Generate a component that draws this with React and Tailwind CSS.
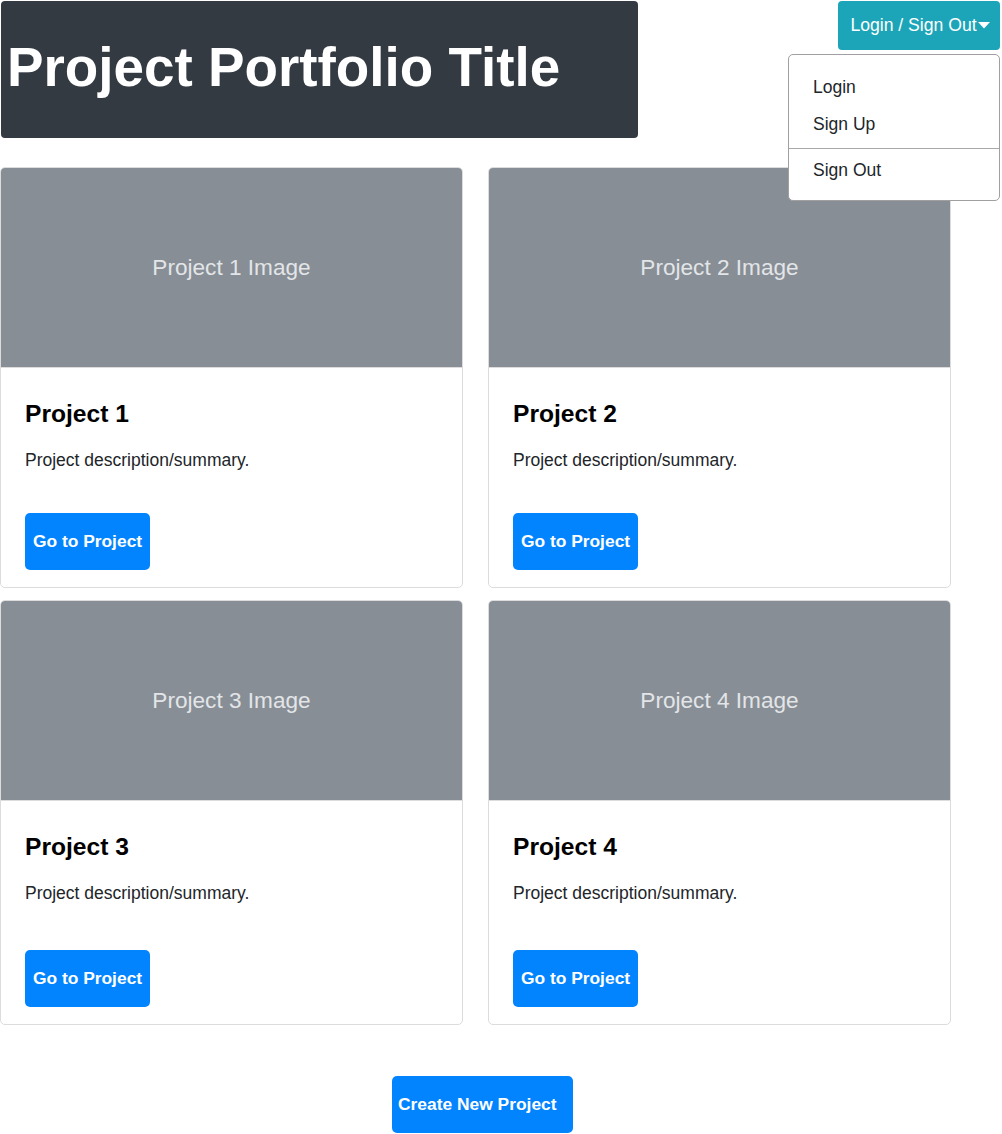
import React from "react";

const projects = [1, 2, 3, 4];

function ProjectCard({ n }) {
  // the second row sits a little taller in the reference
  const gap = n > 2 ? "mt-[44px]" : "mt-[40px]";
  return (
    <div className="flex flex-col rounded-[5px] border border-[#dcdcdc] bg-white overflow-hidden">
      <div className="h-[200px] bg-[#878e95] border-b border-[#dcdcdc] flex items-center justify-center text-[22.6px] text-[#e3e5e8]">
        Project {n} Image
      </div>
      <div className="pl-[24px] pr-[25px] pt-[30px] pb-[17px]">
        <h2 className="text-[24.6px] font-bold text-black leading-[32px]">Project {n}</h2>
        <p className="mt-[17px] text-[17.5px] text-[#212529] leading-[26px]">Project description/summary.</p>
        <button className={`${gap} h-[57px] w-[125px] rounded-[5px] bg-[#0384ff] text-white font-bold text-[17.4px]`}>
          Go to Project
        </button>
      </div>
    </div>
  );
}

export default function App() {
  return (
    <div className="w-[1002px] min-h-[1134px] bg-white font-['Liberation_Sans',Arial,sans-serif]">
      <div className="flex justify-between items-start">
        <div className="ml-px mt-px w-[637px] h-[137px] rounded-[4px] bg-[#343a42] flex items-center pl-[6px] pb-[4px]">
          <h1 className="text-[54.8px] font-bold text-white leading-none">Project Portfolio Title</h1>
        </div>
        <div className="relative mt-px mr-[2px]">
          <button className="h-[49px] w-[162px] rounded-[4px] bg-[#1ca5b8] text-white text-[17.6px] flex items-center justify-center pl-[2px]">
            Login / Sign Out
            <svg width="12" height="7" viewBox="0 0 12 7" className="ml-px">
              <path d="M0 0h12L6 6.5z" fill="white" />
            </svg>
          </button>
          <div className="absolute right-0 top-[53px] z-10 w-[212px] rounded-[5px] border border-[#a0a0a0] bg-white py-[14px] text-[17.5px] text-[#212529]">
            <div className="px-6 leading-[37px]">Login</div>
            <div className="px-6 leading-[37px]">Sign Up</div>
            <div className="my-[5px] border-t border-[#a8a8a8]" />
            <div className="px-6 leading-[32px]">Sign Out</div>
          </div>
        </div>
      </div>
      <div className="mt-[29px] w-[951px] grid grid-cols-2 gap-x-[25px] gap-y-[12px]">
        {projects.map((n) => (
          <ProjectCard key={n} n={n} />
        ))}
      </div>
      <div className="mt-[51px] pl-[392px]">
        <button className="h-[57px] w-[181px] rounded-[5px] bg-[#0384ff] text-white font-bold text-[17.4px] text-left pl-[6px]">
          Create New Project
        </button>
      </div>
    </div>
  );
}
